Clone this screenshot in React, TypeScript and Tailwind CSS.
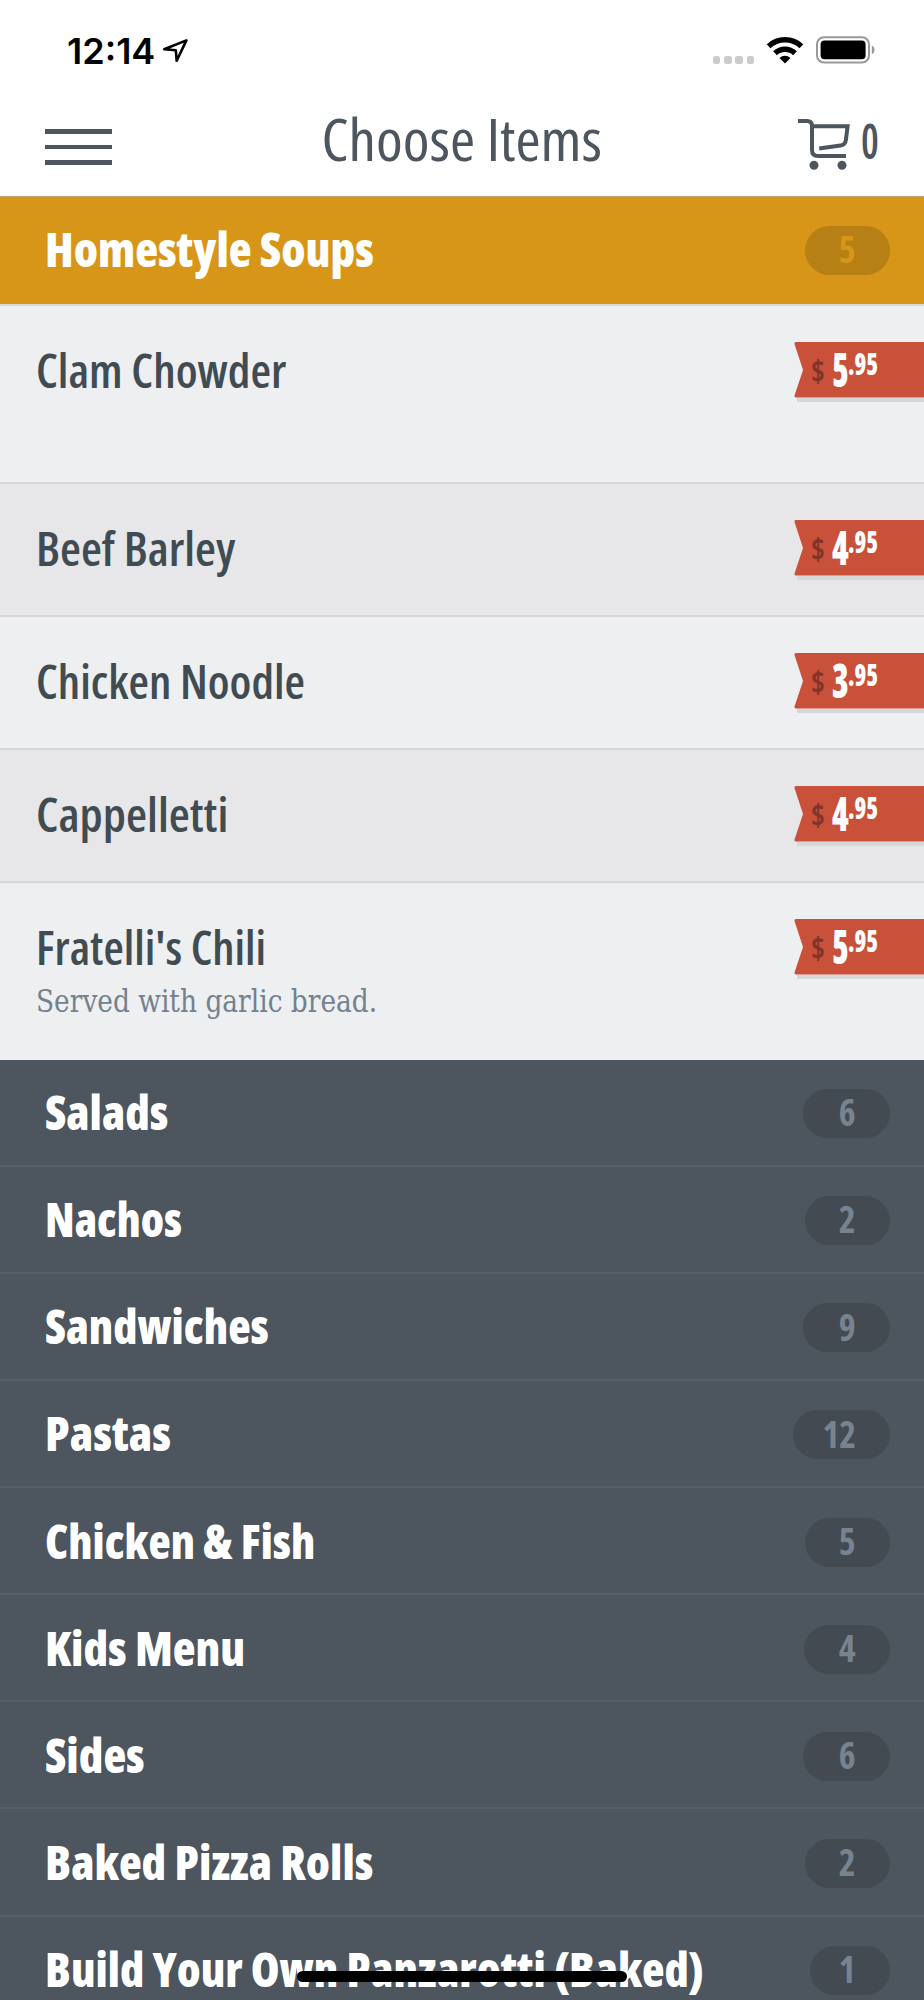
import React from "react";

type Item = {
  name: string;
  price: string;
  cents: string;
  note?: string;
  className: string;
  nameClass: string;
};

const items: Item[] = [
  { name: "Clam Chowder", price: "5", cents: ".95", className: "h-[178px] bg-[#eeeff1]", nameClass: "scale-x-[1.005]" },
  { name: "Beef Barley", price: "4", cents: ".95", className: "h-[133px] bg-[#e7e7e9]", nameClass: "scale-x-[1.022]" },
  { name: "Chicken Noodle", price: "3", cents: ".95", className: "h-[133px] bg-[#eeeff1]", nameClass: "scale-x-100" },
  { name: "Cappelletti", price: "4", cents: ".95", className: "h-[133px] bg-[#e7e7e9]", nameClass: "scale-x-[1.03]" },
  {
    name: "Fratelli's Chili",
    price: "5",
    cents: ".95",
    note: "Served with garlic bread.",
    className: "h-[176.5px] bg-[#eeeff1]",
    nameClass: "scale-x-[0.995]",
  },
];

const categories = [
  { name: "Salads", count: 6, nameClass: "scale-x-100", pillClass: "w-[87px]" },
  { name: "Nachos", count: 2, nameClass: "scale-x-[0.964]", pillClass: "w-[85px]" },
  { name: "Sandwiches", count: 9, nameClass: "scale-x-[0.983]", pillClass: "w-[87px]" },
  { name: "Pastas", count: 12, nameClass: "scale-x-[1.01]", pillClass: "w-[97px]" },
  { name: "Chicken & Fish", count: 5, nameClass: "scale-x-[0.977]", pillClass: "w-[85px]" },
  { name: "Kids Menu", count: 4, nameClass: "scale-x-100", pillClass: "w-[86px]" },
  { name: "Sides", count: 6, nameClass: "scale-x-100", pillClass: "w-[87px]" },
  { name: "Baked Pizza Rolls", count: 2, nameClass: "scale-x-100", pillClass: "w-[85px]" },
  { name: "Build Your Own Panzarotti (Baked)", count: 1, nameClass: "scale-x-[0.987]", pillClass: "w-[80px]" },
];

const StatusBar = () => {
  return (
    <div className="flex h-[78px] shrink-0 items-start justify-between pr-[48px] pl-[67px] pt-[30px] text-black">
      <div className="flex items-center">
        <span className="font-['Inter',sans-serif] text-[36px] leading-[42px] font-semibold">
          12:14
        </span>
        <svg className="ml-1.5 h-[26px] w-[28px]" viewBox="0 0 28 26" fill="none">
          <path
            d="M25.4 2.4 3.2 11.3l11.6 1 .9 10.5z"
            stroke="black"
            strokeWidth="2.6"
            strokeLinejoin="round"
          />
        </svg>
      </div>
      <div className="flex items-start">
        <div className="mt-[26px] flex gap-[3.7px]">
          <span className="h-[7.5px] w-[7.5px] rounded-[2.5px] bg-[#cbcbcb]" />
          <span className="h-[7.5px] w-[7.5px] rounded-[2.5px] bg-[#cbcbcb]" />
          <span className="h-[7.5px] w-[7.5px] rounded-[2.5px] bg-[#cbcbcb]" />
          <span className="h-[7.5px] w-[7.5px] rounded-[2.5px] bg-[#cbcbcb]" />
        </div>
        <svg className="mt-[6.5px] ml-[12px] h-[27px] w-[38px]" viewBox="0 0 38 27" fill="none" stroke="black">
          <path d="M2.6 9.2a24 24 0 0 1 32.8 0" strokeWidth="5.4" />
          <path d="M9 16.2a14.6 14.6 0 0 1 20 0" strokeWidth="5.4" />
          <path d="M19 26.5 13.5 21a8 8 0 0 1 11 0z" fill="black" stroke="none" />
        </svg>
        <svg className="mt-[6px] ml-[12px] h-[28px] w-[60px]" viewBox="0 0 60 28" fill="none">
          <rect x="1" y="1.2" width="52" height="25.4" rx="7" stroke="#999" strokeWidth="2" />
          <rect x="4.6" y="4.6" width="45" height="18.6" rx="4" fill="black" />
          <path d="M55.800 9.500c3.600 1.600 3.600 7.200 0 8.800z" fill="#999" />
        </svg>
      </div>
    </div>
  );
};

const Header = () => {
  return (
    <header className="flex h-[119px] shrink-0 items-center justify-between border-b border-[#bda873] pr-[46px] pl-[45px] text-[#4d565f]">
      <div className="mt-[20px] flex w-[120px] flex-col gap-[11px]">
        <span className="h-[4.6px] w-[67px] bg-[#4d565f]" />
        <span className="h-[4.6px] w-[67px] bg-[#4d565f]" />
        <span className="h-[4.6px] w-[67px] bg-[#4d565f]" />
      </div>
      <h1 className="scale-x-[1.04] pt-[3px] text-[58.5px] leading-none font-normal whitespace-nowrap">
        Choose Items
      </h1>
      <div className="flex w-[120px] items-center justify-end">
        <svg className="mt-[14px] mr-[10px] h-[52px] w-[54px] shrink-0" viewBox="796 118 54 52" fill="none" stroke="#4d565f" strokeWidth="4">
          <path d="M797 121h9q5 0 5 5v24q0 6 6 6h28" />
          <path d="M811 126.2h35.6l-1.7 13.8q-.7 5-5.5 5.6L818.2 148.5" />
          <circle cx="813" cy="165.2" r="4.5" fill="#4d565f" stroke="none" />
          <circle cx="841" cy="165.2" r="4.5" fill="#4d565f" stroke="none" />
        </svg>
        <span className="mt-[7px] w-[17px] origin-left scale-x-[0.83] text-[48px] leading-none font-semibold">0</span>
      </div>
    </header>
  );
};

const PriceTag = ({ price, cents }: { price: string; cents: string }) => {
  return (
    <div className="relative h-[60px] w-[130px] shrink-0">
      <svg className="absolute inset-0" width="130" height="60" viewBox="0 0 130 60">
        <path d="M3 56h127v4H3z" fill="#d5d7d8" />
        <path d="M2 0H130v55.5H2q-2 0-1.5-2L9 28 .5 2Q0 0 2 0z" fill="#c9513a" />
      </svg>
      <div className="relative flex items-start text-white">
        <span className="ml-[17px] w-[21px] origin-left scale-x-95 text-[31px] leading-[56px] font-bold text-[#81352a]">$</span>
        <span className="w-[16px] origin-left scale-x-[0.72] text-[47px] leading-[55px] font-extrabold">{price}</span>
        <span className="origin-left scale-x-[0.79] text-[30px] leading-[43px] font-extrabold">{cents}</span>
      </div>
    </div>
  );
};

const ItemRow = ({ item }: { item: Item }) => {
  return (
    <li className={`flex items-start justify-between border-b-2 border-[#d6d7d9] pt-9 pl-9 last:border-b-0 ${item.className}`}>
      <div>
        <p className={`w-fit origin-left text-[47px] leading-[56px] font-semibold whitespace-nowrap text-[#414b52] ${item.nameClass}`}>
          {item.name}
        </p>
        {item.note && (
          <p className="mt-1.5 w-fit origin-left scale-x-[0.948] font-['DejaVu_Serif',serif] text-[31px] leading-[40px] whitespace-nowrap text-[#74818e]">
            {item.note}
          </p>
        )}
      </div>
      <PriceTag price={item.price} cents={item.cents} />
    </li>
  );
};

type CategoryProps = {
  name: string;
  count: number;
  nameClass: string;
  pillClass: string;
  active?: boolean;
};

const CategoryRow = ({ name, count, nameClass, pillClass, active }: CategoryProps) => {
  return (
    <div
      className={`flex shrink-0 items-center justify-between border-b-2 pr-[34px] pl-[45px] ${
        active ? "h-[109px] border-[#d9dade] bg-[#d79618]" : "h-[107.15px] border-[#565f69] bg-[#4d555e] pt-[3px]"
      }`}
    >
      <h2 className={`origin-left pb-0.5 text-[47px] leading-none font-extrabold whitespace-nowrap text-white ${nameClass}`}>
        {name}
      </h2>
      <span
        className={`flex h-[49px] items-center justify-end rounded-full pr-[34px] pb-[3px] text-[37.5px] leading-none font-bold ${pillClass} ${
          active ? "bg-[#b78015] text-[#d79618]" : "bg-[#434a51] text-[#778490]"
        }`}
      >
        <span className="origin-right scale-x-[0.96]">{count}</span>
      </span>
    </div>
  );
};

const App = () => {
  return (
    <div className="relative flex h-[2000px] w-[924px] flex-col overflow-hidden bg-white font-['Open_Sans',sans-serif] font-stretch-condensed">
      <StatusBar />
      <Header />
      <CategoryRow name="Homestyle Soups" count={5} nameClass="scale-x-[1.003]" pillClass="w-[85px]" active />
      <ul className="shrink-0">
        {items.map((item) => (
          <ItemRow key={item.name} item={item} />
        ))}
      </ul>
      {categories.map((category) => (
        <CategoryRow key={category.name} {...category} />
      ))}
      <div className="absolute bottom-[18px] left-[297px] h-[11px] w-[330px] rounded-full bg-black" />
    </div>
  );
};

export default App;
